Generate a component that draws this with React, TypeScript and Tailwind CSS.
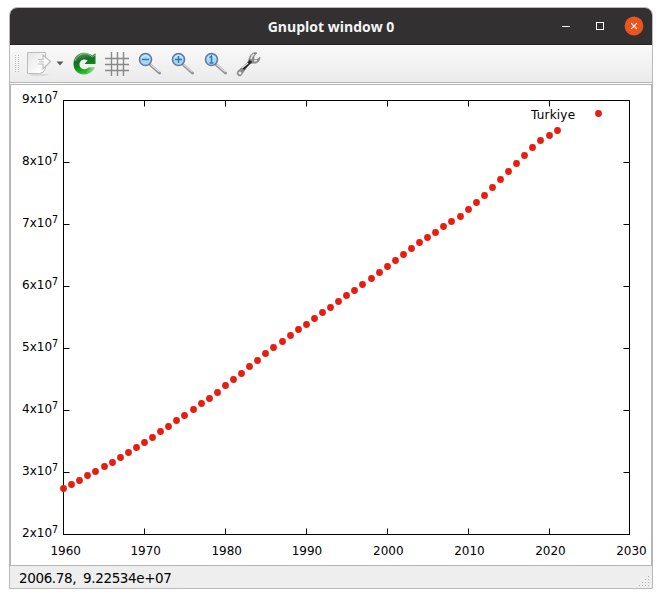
import React from "react";

// Plotted height of each yearly sample, starting with 1960
const samples = [
  403, 399, 395, 390, 386, 381, 377, 372, 367, 362, 357, 352, 346, 341, 335,
  330, 324, 318, 313, 307, 300, 294, 288, 281, 275, 268, 262, 256, 250, 244,
  239, 233, 227, 222, 216, 210, 205, 199, 193, 187, 181, 175, 169, 163, 157,
  152, 147, 141, 136, 131, 124, 117, 110, 102, 94, 86, 78, 70, 62, 55, 50, 45,
];
const decades = [1960, 1970, 1980, 1990, 2000, 2010, 2020, 2030];
const labelStarts = [39.4, 119.4, 200.4, 280.7, 362, 443.2, 524.2, 605.2];
const px = (year: number) => Math.floor(52.6 + (year - 1960) * 8.091) + 0.5;
const chartFont = '"DejaVu Sans", sans-serif';

function Chart() {
  return (
    <svg width="640" height="480" viewBox="0 0 640 480" fontFamily={chartFont} fontSize="12" className="block">
      <rect x="52.5" y="15.5" width="566" height="434" fill="none" stroke="#000" />
      {decades.map((d, i) => (
        <g key={d}>
          <path d={`M${px(d)} 449.5v-6M${px(d)} 15.5v6`} stroke="#000" />
          <text x={labelStarts[i]} y="470">{d}</text>
        </g>
      ))}
      {[2, 3, 4, 5, 6, 7, 8, 9].map((n) => {
        const y = Math.round(449 - (n - 2) * 62) + 0.5;
        return (
          <g key={n}>
            <path d={`M52.5 ${y}h6M618.5 ${y}h-6`} stroke="#000" />
            <text x="11" y={y + 2.5}>{n}x10</text>
            <text x="41" y={y - 1.5} fontSize="9.6">7</text>
          </g>
        );
      })}
      <text x="520" y="34" letterSpacing=".2">Turkiye</text>
      <circle cx="587.5" cy="28.5" r="3.4" fill="#e51e10" />
      {samples.map((y, i) => (
        <circle key={i} cx={px(1960 + i)} cy={y + 0.5} r="3.4" fill="#e51e10" />
      ))}
    </svg>
  );
}

function Magnifier({ mark }: { mark: string }) {
  return (
    <svg width="24" height="24" viewBox="0 0 24 24">
      <path d="m12.500 13 9 8" stroke="#929292" strokeWidth="3" strokeLinecap="round" />
      <path d="m12.500 12.500 9 7.500" stroke="#ddd" strokeWidth="1.3" />
      <circle cx="7.5" cy="7.5" r="6" fill="#a5daf5" stroke="#64799c" strokeWidth="1.6" />
      <path d="M3.500 6a4.500 4.500 0 0 1 8 0" fill="none" stroke="#d7f1fd" />
      <path d={mark} fill="none" stroke="#3a73b0" strokeWidth="1.4" />
    </svg>
  );
}

export default function App() {
  return (
    <div className="h-[598px] w-[662px] overflow-hidden bg-white pt-[7px] pl-[9px]">
      <div className="flex h-[582px] w-[644px] flex-col overflow-hidden rounded-t-[8px] border border-[#b9b9b9] bg-white">
        <header className="relative flex h-[37px] shrink-0 items-center justify-end border-b border-[#242223] bg-[#333031] pr-[8px]">
          <h1 className="absolute inset-x-0 text-center font-['Open_Sans',sans-serif] text-[14px] font-bold text-[#f5f5f5]">Gnuplot window 0</h1>
          <svg width="88" height="20" viewBox="0 0 88 20" fill="none" stroke="#fff">
            <path d="M6 10.500h8" />
            <rect x="40.5" y="6.5" width="7" height="7" />
            <circle cx="78" cy="10" r="9.4" fill="#e95420" stroke="none" />
            <path d="m75.200 7.200 5.600 5.600m0-5.600-5.600 5.600" strokeWidth="1.2" />
          </svg>
        </header>
        <nav className="flex h-[38px] shrink-0 items-center border-b border-[#b5b5b5] bg-linear-to-b from-[#f9f9f9] to-[#ebebeb] pl-[4px]">
          <svg width="7" height="18" viewBox="0 0 7 18" fill="#bbb">
            {[0, 2, 4, 6, 8, 10, 12, 14, 16].map((y) => (
              <path key={y} d={`M1 ${y}h1v1h-1zM4 ${y}h1v1h-1z`} />
            ))}
          </svg>
          <svg className="ml-[5px]" width="26" height="26" viewBox="0 0 26 26">
            <defs>
              <linearGradient id="paper" x2="1" y2="1"><stop stopColor="#e4e4e4" /><stop offset=".7" stopColor="#fbfbfb" /></linearGradient>
            </defs>
            <ellipse cx="13" cy="23.8" rx="10" ry="1.3" fill="#dadada" />
            <path d="M1.500 1.500h18v16q-2 5-6 5h-12z" fill="url(#paper)" stroke="#bcbcbc" />
            <path d="M12 8.500h5v-4.500l7.500 6.500-7.500 7.500v-5h-5.500M13 10.700h5" fill="#fafafa" stroke="#bbb" strokeWidth="1.1" />
          </svg>
          <svg className="ml-[4px]" width="8" height="5" viewBox="0 0 8 5"><path d="M.5.5h7L4 4.500z" fill="#5c5c5c" /></svg>
          <svg className="ml-[8px]" width="26" height="26" viewBox="0 0 26 26">
            <defs>
              <linearGradient id="green" gradientUnits="userSpaceOnUse" x1="8" y1="2" x2="14" y2="24">
                <stop stopColor="#4c9b55" />
                <stop offset=".35" stopColor="#146e23" />
                <stop offset=".6" stopColor="#128a18" />
                <stop offset="1" stopColor="#36d334" />
              </linearGradient>
              <linearGradient id="tail" gradientUnits="userSpaceOnUse" x1="14" y1="0" x2="24" y2="0">
                <stop stopColor="#eee" stopOpacity="0" />
                <stop offset="1" stopColor="#eee" stopOpacity=".75" />
              </linearGradient>
            </defs>
            <path d="M20.200 4.500 23.500 2.200V13H12.500L15.700 9.500C11 7 7.500 10 7.500 13.500 7.500 18 13 20 16.500 16.500H22.800C18 27 1.500 25.500 1.500 12.800 1.500 2.500 12 -1.500 20.200 4.500Z" fill="url(#green)" />
            <path d="M14 17.700q1.500 0 2.500-1.200h6.300Q20 22.500 14 23.500Z" fill="url(#tail)" />
            <path d="M3 10C5 3 14 0 20.500 6L23 4" fill="none" stroke="#9cca9d" strokeWidth=".9" />
          </svg>
          <svg className="ml-[6px]" width="26" height="26" viewBox="0 0 26 26"><path d="M1 7.500h24M1 13.500h24M1 19.500h24M7.500 1v24M13.500 1v24M19.500 1v24" stroke="#888" strokeWidth="1.4" /></svg>
          <div className="ml-[8px] flex gap-[9px]">
            <Magnifier mark="M4 7.500h7" />
            <Magnifier mark="M4 7.500h7M7.500 4v7" />
            <Magnifier mark="m5.500 5.500 2-1.500v7m-2 0h4" />
          </div>
          <svg className="ml-[8px]" width="25" height="26" viewBox="0 0 25 26">
            <path d="m2 20 10-9 2-6c2-3 4-4 7-3l-3 3v4l4-1 2-2c0 4-3 7-7 6l-4 1-7 10c-1 4-7 1-4-3Z" fill="#8b8b8b" stroke="#777" strokeWidth=".6" />
            <path d="m7 18 8-8" stroke="#252525" strokeWidth="3" />
            <path d="m15 8 1-3 2-2M6 17l6-5M18 10l3-.5" stroke="#e5e5e5" strokeWidth="1.5" fill="none" />
            <circle cx="4" cy="22" r="1.5" fill="#eee" />
          </svg>
        </nav>
        <main className="mt-px h-[482px] shrink-0 border border-[#b5b5b5] bg-white"><Chart /></main>
        <footer className="flex min-h-0 flex-1 items-center justify-between bg-[#eee] pl-[9px]">
          <span className="pt-[2px] font-['DejaVu_Sans',sans-serif] text-[13.5px] whitespace-pre tracking-[-0.38px] [word-spacing:-0.4px]">2006.78,  9.22534e+07</span>
          <svg className="self-end" width="14" height="12" viewBox="0 0 14 12" fill="#b5b5b5"><path d="M10 0h1v1h-1zM7 3h1v1H7zM10 3h1v1h-1zM4 6h1v1H4zM7 6h1v1H7zM10 6h1v1h-1zM1 9h1v1H1zM4 9h1v1H4zM7 9h1v1H7zM10 9h1v1h-1z" /></svg>
        </footer>
      </div>
    </div>
  );
}
